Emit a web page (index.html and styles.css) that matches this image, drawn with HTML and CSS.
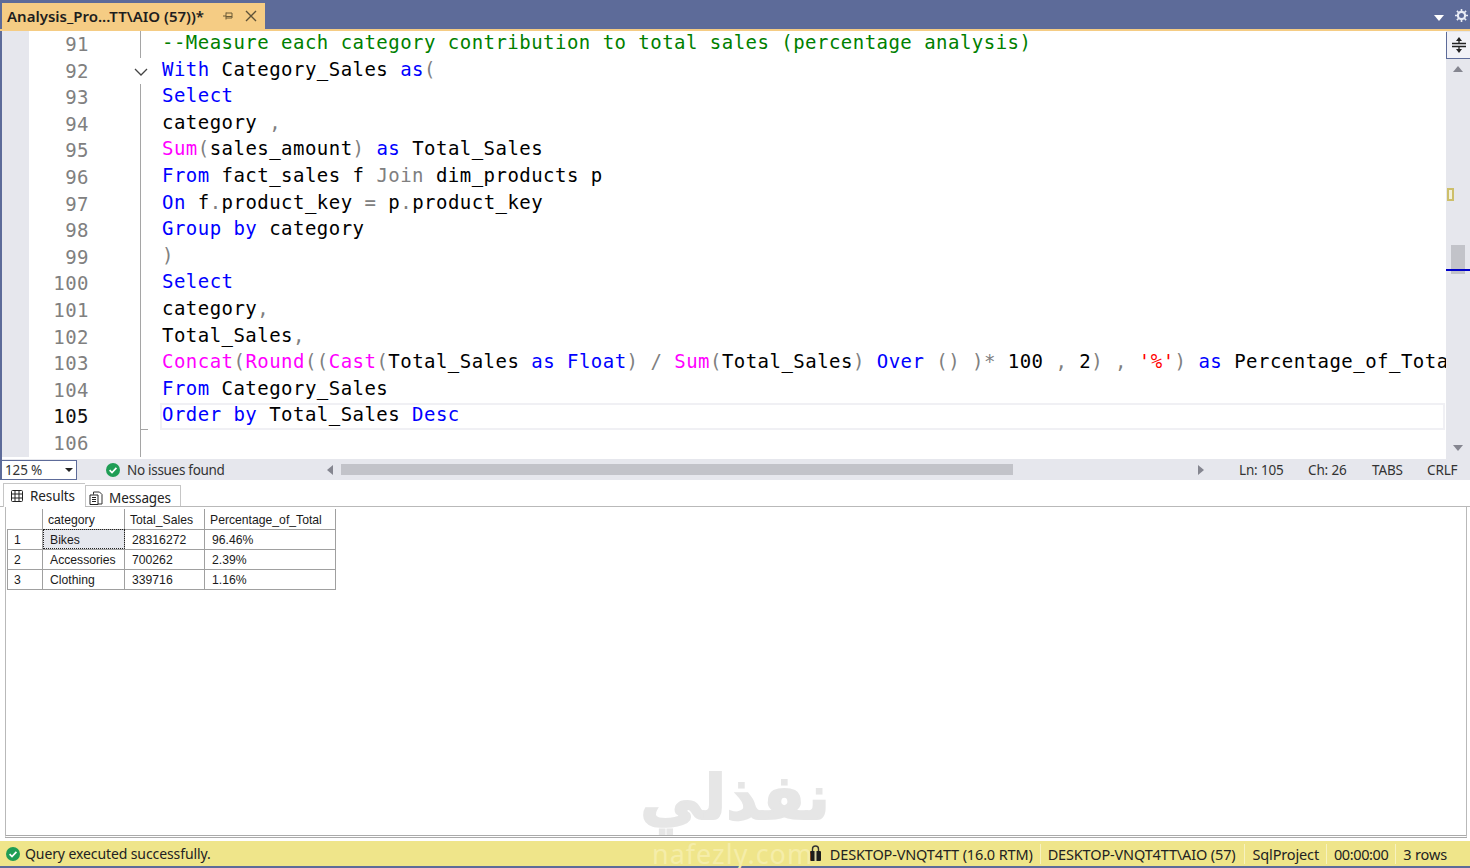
FILE: index.html
```html
<!DOCTYPE html>
<html lang="en">
<head>
    <meta charset="UTF-8">
    <meta name="viewport" content="width=device-width, initial-scale=1.0">
    <title>Analysis_Project - SSMS</title>
    <link rel="stylesheet" href="styles.css">
</head>
<body>
    <div class="app">
        <div class="titlebar">
            <div class="doc-tab">
                <span class="doc-name">Analysis_Pro...TT\AIO (57))*</span>
                <svg class="pin" width="12" height="12" viewBox="0 0 12 12"><path d="M1 6h3M4 2.500v7M4 3h6v5H4M4 6.500h6" fill="none" stroke="#6b5a36" stroke-width="1"/></svg>
                <svg class="close" width="12" height="12" viewBox="0 0 12 12"><path d="M1 1l10 10M11 1L1 11" fill="none" stroke="#5e5238" stroke-width="1.400"/></svg>
            </div>
            <div class="title-tools">
                <svg class="drop-arrow" width="10" height="6" viewBox="0 0 10 6"><path d="M0 0h10L5 6z" fill="#fff"/></svg>
                <svg width="13" height="13" viewBox="0 0 13 13"><circle cx="6.500" cy="6.500" r="3.600" fill="none" stroke="#e8ebf5" stroke-width="2.200"/><path d="M6.500 0v3M6.500 10v3M0 6.500h3M10 6.500h3M1.900 1.900L4 4M9 9l2.100 2.100M11.100 1.900L9 4M4 9l-2.100 2.100" stroke="#e8ebf5" stroke-width="1.600"/></svg>
            </div>
        </div>

        <div class="editor">
            <div class="code-area">
                <div class="row"><span class="margin"></span><span class="num">91</span><span class="fold"></span><span class="code c-green">--Measure each category contribution to total sales (percentage analysis)</span></div>
                <div class="row"><span class="margin"></span><span class="num">92</span><span class="fold fold-open"><svg width="14" height="8" viewBox="0 0 14 8"><path d="M1 1l6 6 6-6" fill="none" stroke="#444" stroke-width="1.300"/></svg></span><span class="code"><b class="kw">With</b> Category_Sales <b class="kw">as</b><b class="op">(</b></span></div>
                <div class="row"><span class="margin"></span><span class="num">93</span><span class="fold"></span><span class="code"><b class="kw">Select</b></span></div>
                <div class="row"><span class="margin"></span><span class="num">94</span><span class="fold"></span><span class="code">category <b class="op">,</b></span></div>
                <div class="row"><span class="margin"></span><span class="num">95</span><span class="fold"></span><span class="code"><b class="fn">Sum</b><b class="op">(</b>sales_amount<b class="op">)</b> <b class="kw">as</b> Total_Sales</span></div>
                <div class="row"><span class="margin"></span><span class="num">96</span><span class="fold"></span><span class="code"><b class="kw">From</b> fact_sales f <b class="op">Join</b> dim_products p</span></div>
                <div class="row"><span class="margin"></span><span class="num">97</span><span class="fold"></span><span class="code"><b class="kw">On</b> f<b class="op">.</b>product_key <b class="op">=</b> p<b class="op">.</b>product_key</span></div>
                <div class="row"><span class="margin"></span><span class="num">98</span><span class="fold"></span><span class="code"><b class="kw">Group by</b> category</span></div>
                <div class="row"><span class="margin"></span><span class="num">99</span><span class="fold"></span><span class="code"><b class="op">)</b></span></div>
                <div class="row"><span class="margin"></span><span class="num">100</span><span class="fold"></span><span class="code"><b class="kw">Select</b></span></div>
                <div class="row"><span class="margin"></span><span class="num">101</span><span class="fold"></span><span class="code">category<b class="op">,</b></span></div>
                <div class="row"><span class="margin"></span><span class="num">102</span><span class="fold"></span><span class="code">Total_Sales<b class="op">,</b></span></div>
                <div class="row"><span class="margin"></span><span class="num">103</span><span class="fold"></span><span class="code"><b class="fn">Concat</b><b class="op">(</b><b class="fn">Round</b><b class="op">((</b><b class="fn">Cast</b><b class="op">(</b>Total_Sales <b class="kw">as</b> <b class="kw">Float</b><b class="op">)</b> <b class="op">/</b> <b class="fn">Sum</b><b class="op">(</b>Total_Sales<b class="op">)</b> <b class="kw">Over</b> <b class="op">()</b> <b class="op">)*</b> 100 <b class="op">,</b> 2<b class="op">)</b> <b class="op">,</b> <b class="str">'%'</b><b class="op">)</b> <b class="kw">as</b> Percentage_of_Total</span></div>
                <div class="row"><span class="margin"></span><span class="num">104</span><span class="fold"></span><span class="code"><b class="kw">From</b> Category_Sales</span></div>
                <div class="row row-current"><span class="margin"></span><span class="num">105</span><span class="fold fold-end"></span><span class="code"><b class="kw">Order by</b> Total_Sales <b class="kw">Desc</b></span></div>
                <div class="row"><span class="margin"></span><span class="num">106</span><span class="fold"></span><span class="code"></span></div>
            </div>
            <div class="vscroll">
                <div class="split-btn">
                    <svg width="14" height="16" viewBox="0 0 14 16"><path d="M0 6.500h14M0 9.500h14M7 3v3M7 10v3" stroke="#222" stroke-width="1.300" fill="none"/><path d="M4 4h6L7 0zM4 12h6l-3 4z" fill="#222"/></svg>
                </div>
                <div class="arrow-up"></div>
                <div class="mark-yellow"></div>
                <div class="vthumb"></div>
                <div class="caret-line"></div>
                <div class="arrow-down"></div>
            </div>
        </div>

        <div class="editor-status">
            <div class="zoom-box"><span>125 %</span><i></i></div>
            <svg class="ok-icon" width="14" height="14" viewBox="0 0 14 14"><circle cx="7" cy="7" r="7" fill="#1f9d55"/><path d="M3.600 7.200l2.400 2.300 4.400-4.600" fill="none" stroke="#fff" stroke-width="1.700"/></svg>
            <span class="issues">No issues found</span>
            <div class="hscroll">
                <i class="arrow-left"></i>
                <div class="htrack"><div class="hthumb"></div></div>
                <i class="arrow-right"></i>
            </div>
            <div class="pos-info">
                <span class="pos-ln">Ln: 105</span>
                <span class="pos-ch">Ch: 26</span>
                <span class="pos-tabs">TABS</span>
                <span class="pos-crlf">CRLF</span>
            </div>
        </div>

        <div class="results-tabs">
            <div class="res-tab res-tab-active">
                <svg width="12" height="12" viewBox="0 0 12 12"><path d="M1.500.5h9a1 1 0 0 1 1 1v9a1 1 0 0 1-1 1h-9a1 1 0 0 1-1-1v-9a1 1 0 0 1 1-1zM.5 4h11M.5 8h11M4 .5v11M8 .5v11" fill="none" stroke="#222" stroke-width="1"/></svg>
                Results
            </div>
            <div class="res-tab">
                <svg width="14" height="14" viewBox="0 0 14 14"><path d="M4.500 3.500V1h6l2.500 2.500V13H9" fill="none" stroke="#333"/><path d="M1 4h8v9.500H1z" fill="#fff" stroke="#222"/><path d="M3 6.500h4M3 8.500h4M3 10.500h4" stroke="#222"/></svg>
                Messages
            </div>
        </div>

        <div class="results-pane">
            <table class="grid">
                <thead>
                    <tr><th class="col-idx"></th><th class="col-cat">category</th><th class="col-total">Total_Sales</th><th class="col-pct">Percentage_of_Total</th></tr>
                </thead>
                <tbody>
                    <tr><td class="idx">1</td><td class="selected">Bikes</td><td>28316272</td><td>96.46%</td></tr>
                    <tr><td class="idx">2</td><td>Accessories</td><td>700262</td><td>2.39%</td></tr>
                    <tr><td class="idx">3</td><td>Clothing</td><td>339716</td><td>1.16%</td></tr>
                </tbody>
            </table>
        </div>

        <div class="statusbar">
            <span class="status-msg">
                <svg width="14" height="14" viewBox="0 0 14 14"><circle cx="7" cy="7" r="7" fill="#1f9d55"/><path d="M3.600 7.200l2.400 2.300 4.400-4.600" fill="none" stroke="#fff" stroke-width="1.700"/></svg>
                Query executed successfully.
            </span>
            <div class="status-info">
                <svg width="13" height="17" viewBox="0 0 13 17"><path d="M3.500 7V4a3 3 0 0 1 6 0v3" fill="none" stroke="#333" stroke-width="1.400"/><rect x="1" y="6" width="11" height="10" rx="1" fill="#1c1c1c"/><rect x="5.500" y="6" width="2" height="10" fill="#d8d2a4"/></svg>
                <span class="cell cell-server">DESKTOP-VNQT4TT (16.0 RTM)</span>
                <span class="cell cell-user">DESKTOP-VNQT4TT\AIO (57)</span>
                <span class="cell cell-db">SqlProject</span>
                <span class="cell cell-time">00:00:00</span>
                <span class="cell cell-rows">3 rows</span>
            </div>
        </div>
        <div class="bottom-edge"></div>

        <!-- site watermark sits over the results and status bar -->
        <div class="wm-ar" dir="rtl">نفذلي</div>
        <div class="wm-en">nafezly.com</div>
    </div>
</body>
</html>
```

FILE: styles.css
```css
* {
    box-sizing: border-box;
}
html, body {
    margin: 0;
    height: 100%;
    overflow: hidden;
}
body {
    font-family: "Noto Sans", "Open Sans", sans-serif;
    color: #222;
    background-color: #fff;
}
.app {
    position: relative;
    width: 1470px;
    height: 868px;
    display: flex;
    flex-direction: column;
    background-color: #fff;
    overflow: hidden;
}

/* top document well */
.titlebar {
    height: 31px;
    flex: none;
    display: flex;
    justify-content: space-between;
    align-items: flex-end;
    padding-left: 2px;
    background-color: #5d6b99;
    border-bottom: 2px solid #f5cc84;
}
.doc-tab {
    width: 263px;
    height: 26px;
    display: flex;
    align-items: center;
    padding-left: 5px;
    background-color: #f5cc84;
}
.doc-name {
    width: 215px;
    font-size: 15px;
    font-weight: 600;
    white-space: nowrap;
    color: #1e1e1e;
}
.pin {
    flex: none;
}
.close {
    flex: none;
    margin-left: 11px;
}
.title-tools {
    height: 100%;
    display: flex;
    align-items: center;
    gap: 11px;
    padding: 2px 2px 0 0;
}
.drop-arrow {
    margin-top: 4px;
}

/* code editor */
.editor {
    flex: none;
    height: 428px;
    display: flex;
    border-left: 2px solid #5d6b99;
}
.code-area {
    flex: 1;
    min-width: 0;
    overflow: hidden;
}
.row {
    height: 26.6px;
    display: flex;
    font-family: "DejaVu Sans Mono", "Liberation Mono", monospace;
    font-size: 19px;
    line-height: 26.6px;
    letter-spacing: 0.47px;
    white-space: pre;
}
.margin {
    width: 27px;
    flex: none;
    background-color: #e6e7ed;
}
.num {
    width: 60px;
    flex: none;
    text-align: right;
    color: #808080;
}
.fold {
    flex: none;
    width: 0;
    margin-left: 51px;
    margin-right: 21px;
    border-left: 1px solid #a5a5a5;
    position: relative;
}
.fold-open {
    border-left-color: transparent;
}
.fold-open svg {
    position: absolute;
    left: -7px;
    top: 10px;
}
.fold-end::after {
    content: "";
    position: absolute;
    left: 0;
    bottom: 0;
    width: 7px;
    height: 1px;
    background-color: #a5a5a5;
}
.code {
    flex: 1;
    min-width: 0;
    line-height: 23.6px;
    color: #000;
}
.row-current .code {
    margin-left: -2px;
    padding-left: 2px;
    margin-right: 1px;
    box-shadow: inset 0 0 0 2px #f0f0f4;
}
.row-current .num {
    color: #111;
}
.code b {
    font-weight: 400;
}
.c-green {
    color: #008000;
}
.code .kw {
    color: #0000ff;
}
.code .fn {
    color: #ff00ff;
}
.code .op {
    color: #808080;
}
.code .str {
    color: #ff0000;
}

/* right scrollbar with split button */
.vscroll {
    width: 24px;
    flex: none;
    position: relative;
    background-color: #e6e7ed;
}
.split-btn {
    height: 27px;
    margin-top: 1px;
    display: flex;
    align-items: center;
    justify-content: center;
    background-color: #f2f2f7;
    border: 1px solid #5d6b99;
    border-right: none;
    border-top: none;
}
.arrow-up {
    width: 0;
    margin: 7px auto 0;
    border-left: 5px solid transparent;
    border-right: 5px solid transparent;
    border-bottom: 6px solid #858690;
}
.arrow-down {
    position: absolute;
    left: 7px;
    bottom: 8px;
    border-left: 5px solid transparent;
    border-right: 5px solid transparent;
    border-top: 6px solid #858690;
}
.mark-yellow {
    position: absolute;
    left: 1px;
    top: 157px;
    width: 7px;
    height: 13px;
    border: 2px solid #cdbf6a;
    background-color: #f3f1dc;
}
.vthumb {
    position: absolute;
    left: 5px;
    top: 214px;
    width: 14px;
    height: 29px;
    background-color: #c2c3c9;
}
.caret-line {
    position: absolute;
    left: 0;
    right: 0;
    top: 238px;
    height: 2px;
    background-color: #0000c8;
}

/* zoom and position strip */
.editor-status {
    flex: none;
    height: 21px;
    display: flex;
    align-items: center;
    font-size: 13.5px;
    letter-spacing: -0.15px;
    background-color: #e6e7ed;
    border-left: 2px solid #5d6b99;
    color: #333;
}
.zoom-box {
    width: 75px;
    height: 20px;
    display: flex;
    align-items: center;
    justify-content: space-between;
    padding: 0 3px 0 3px;
    background-color: #fff;
    border: 1px solid #5d6b99;
    border-left: none;
}
.zoom-box i {
    border-left: 4px solid transparent;
    border-right: 4px solid transparent;
    border-top: 4px solid #222;
}
.ok-icon {
    margin-left: 29px;
}
.issues {
    width: 200px;
    margin-left: 7px;
    letter-spacing: -0.3px;
    white-space: nowrap;
}
.hscroll {
    width: 877px;
    display: flex;
    align-items: center;
}
.arrow-left {
    border-top: 5px solid transparent;
    border-bottom: 5px solid transparent;
    border-right: 6px solid #858690;
}
.arrow-right {
    border-top: 5px solid transparent;
    border-bottom: 5px solid transparent;
    border-left: 6px solid #858690;
}
.htrack {
    flex: 1;
    padding: 0 185px 0 8px;
}
.hthumb {
    height: 11px;
    background-color: #c2c3c9;
}
.pos-info {
    display: flex;
    white-space: nowrap;
    padding-left: 35px;
}
.pos-ln {
    width: 69px;
}
.pos-ch {
    width: 64px;
}
.pos-tabs {
    width: 55px;
}

/* results */
.results-tabs {
    flex: none;
    height: 27px;
    padding: 4px 0 0 3px;
    display: flex;
    align-items: flex-end;
    font-size: 13.5px;
    letter-spacing: -0.1px;
    color: #222;
    border-bottom: 1px solid #b9b9b9;
}
.res-tab {
    width: 96px;
    height: 21px;
    display: flex;
    align-items: center;
    gap: 6px;
    padding: 3px 0 0 3px;
    background-color: #fff;
    border: 1px solid #c6c6c6;
    border-bottom: none;
}
.res-tab-active {
    width: 82px;
    height: 24px;
    gap: 7px;
    padding: 0 0 0 7px;
    margin-bottom: -1px;
    border-right: none;
}
.results-pane {
    flex: none;
    height: 331px;
    margin: 0 3px 0 5px;
    padding: 2px 0 0 1px;
    border-left: 1px solid #b9b9b9;
    border-right: 1px solid #b9b9b9;
    border-bottom: 3px double #aaa;
}
.grid {
    border-collapse: collapse;
    table-layout: fixed;
    width: 328px;
    font-family: "Liberation Sans", Arial, sans-serif;
    font-size: 12.2px;
    color: #1a1a1a;
}
.grid th {
    height: 20px;
    padding: 3px 0 0 5px;
    font-weight: 400;
    text-align: left;
    white-space: nowrap;
    border-right: 1px solid #a0a0a0;
    border-bottom: 1px solid #a0a0a0;
}
.grid td {
    height: 20px;
    padding: 1px 0 0 7px;
    border: 1px solid #a0a0a0;
}
.col-idx {
    width: 35px;
}
.col-cat {
    width: 82px;
}
.col-total {
    width: 80px;
}
.col-pct {
    width: 131px;
}
.grid .idx {
    padding-left: 6px;
    padding-top: 2px;
}
.grid .selected {
    background-color: #e6e8ee;
    outline: 1px dotted #222;
    outline-offset: -1px;
}

/* bottom status */
.statusbar {
    flex: none;
    margin-top: 3px;
    height: 25px;
    display: flex;
    align-items: center;
    justify-content: space-between;
    padding: 0 23px 0 6px;
    background-color: #efe58a;
    font-size: 14px;
    color: #222;
    white-space: nowrap;
}
.status-msg {
    display: flex;
    align-items: center;
    gap: 5px;
    letter-spacing: -0.1px;
}
.status-msg svg {
    display: block;
}
.status-info {
    display: flex;
    align-items: center;
    letter-spacing: -0.15px;
    font-size: 14.5px;
}
.cell {
    padding: 0 7px;
    border-left: 1px solid #f7f2c0;
}
.cell-server {
    border-left: none;
    padding: 0 7px 0 8px;
}
.cell-user {
    padding-right: 9px;
}
.cell-time {
    letter-spacing: -0.4px;
}
.cell-rows {
    padding-right: 0;
}
.bottom-edge {
    flex: 1;
    background-color: #5d6b99;
}

/* watermark */
.wm-ar {
    position: absolute;
    left: 640px;
    top: 748px;
    width: 190px;
    text-align: center;
    font-family: "DejaVu Sans", sans-serif;
    font-size: 62px;
    font-weight: 700;
    line-height: 100px;
    color: #e6e6e6;
    -webkit-text-stroke: 2px #e6e6e6;
    pointer-events: none;
}
.wm-en {
    position: absolute;
    left: 652px;
    top: 837px;
    font-family: "Noto Sans", sans-serif;
    font-size: 27px;
    letter-spacing: 1px;
    line-height: 34px;
    color: #f5eda9;
    pointer-events: none;
}
```
